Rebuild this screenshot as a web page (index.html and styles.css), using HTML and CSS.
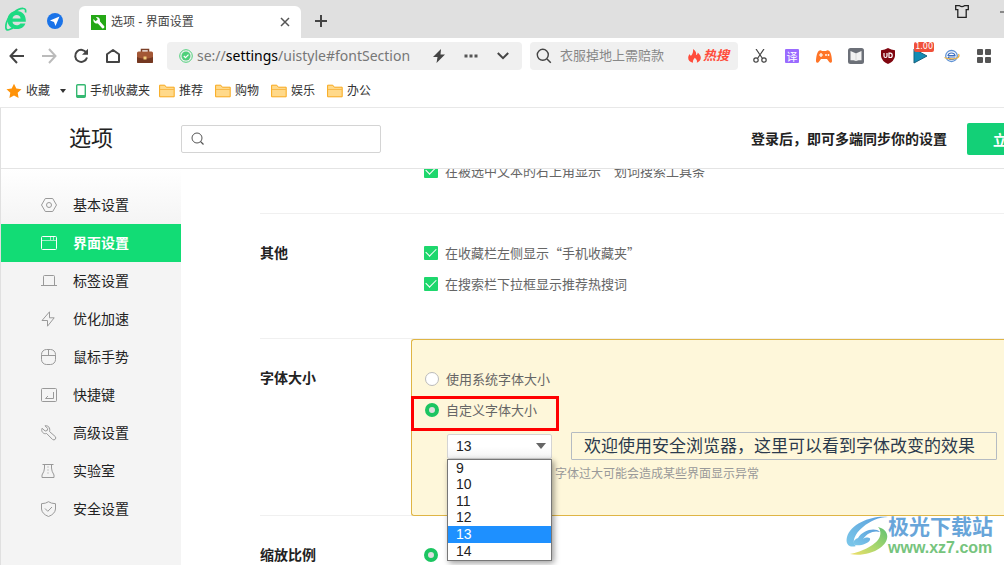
FILE: index.html
```html
<!DOCTYPE html>
<html lang="zh-CN">
<head>
<meta charset="utf-8">
<title>选项 - 界面设置</title>
<link rel="stylesheet" href="styles.css">
</head>
<body>
<div class="browser">
  <header class="tabstrip">
    <svg class="brand" width="24" height="26" viewBox="0 0 24 26"><path d="M12.500 5C7 5 3.500 9 3.500 14.300c0 5.200 3.600 8.800 9.200 8.800 4.300 0 7.400-2 8.700-5.600h-5c-.7 1.200-2 1.800-3.600 1.800-2.500 0-4.100-1.300-4.300-3.500h13.300C22.200 9.400 18.800 5 12.500 5zm-4 7.500c.4-2.200 1.900-3.500 4.200-3.500 2.200 0 3.700 1.300 3.900 3.500z" fill="#1fda83"/><path d="M21.500 6.500c.6-2.500-.2-4-2-4C14 2 5 9 2.500 16.500 1.300 20.500 1.500 24 4 24c1.500 0 3-1 5-2" fill="none" stroke="#1fda83" stroke-width="1.700"/></svg>
    <svg class="pilot" width="16" height="16" viewBox="0 0 16 16"><circle cx="8" cy="8" r="8" fill="#1a73e8"/><path d="M12.500 3.500 3 7.500l4 1.500 1.500 4z" fill="#fff"/></svg>
    <div class="tab">
      <svg width="15" height="15" viewBox="0 0 15 15"><path d="M0 0h15v15H0z" fill="#25a816"/><path d="m7.500 7 4.500 5" stroke="#fff" stroke-width="2.800" stroke-linecap="round"/><path d="M3.200 2.700 5.700 5.200M2.500 4c-.8 4 3.500 6 6 3.500C10 5 8 1.500 5 2.200l1.800 2-2.200 2z" fill="#fff"/></svg>
      <span class="tab-title">选项 - 界面设置</span>
      <button class="plain" aria-label="关闭标签"><svg width="10" height="10" viewBox="0 0 10 10"><path d="m1 1 8 8m0-8L1 9" stroke="#555" stroke-width="1.500"/></svg></button>
    </div>
    <button class="plain newtab" aria-label="新建标签"><svg width="12" height="12" viewBox="0 0 12 12"><path d="M6 0v12M0 6h12" stroke="#444" stroke-width="2"/></svg></button>
    <button class="plain skin" aria-label="皮肤"><svg width="14" height="13" viewBox="0 0 14 13"><path d="M.7.700h3.800q2.500 1.800 5 0h3.800v4h-2.100v7.600H2.800V4.700H.7z" fill="none" stroke="#222" stroke-width="1.300"/></svg></button>
    <button class="plain minimise" aria-label="最小化"><svg width="10" height="2" viewBox="0 0 10 2"><path d="M0 1h10" stroke="#333"/></svg></button>
  </header>

  <nav class="toolbar">
    <div class="tools">
      <button class="plain" aria-label="后退"><svg width="16" height="16" viewBox="0 0 16 16"><path d="M15 8H2m6-7L1.500 8 8 15" fill="none" stroke="#444" stroke-width="2"/></svg></button>
      <button class="plain" aria-label="前进"><svg width="16" height="16" viewBox="0 0 16 16"><path d="M1 8h13M8 1l6.500 7L8 15" fill="none" stroke="#bbb" stroke-width="2"/></svg></button>
      <button class="plain" aria-label="刷新"><svg width="16" height="16" viewBox="0 0 16 16"><path d="M13.500 5A6 6 0 1 0 14 9.500" fill="none" stroke="#444" stroke-width="2"/><path d="M15 .8v6H9z" fill="#444"/></svg></button>
      <button class="plain" aria-label="主页"><svg width="16" height="16" viewBox="0 0 16 16"><path d="M2 6.300 8 2l6 4.300V14H2z" fill="none" stroke="#444" stroke-width="2" stroke-linejoin="round"/></svg></button>
      <button class="plain" aria-label="工具箱"><svg width="18" height="16" viewBox="0 0 18 16"><path d="M5.500 4V1.500h7V4" fill="none" stroke="#7b3f27" stroke-width="1.500"/><rect x="1" y="3.500" width="16" height="11.500" rx="1.500" fill="#a35735"/><path d="M1 9c5 2 11 2 16 0v5q0 1-1 1H2q-1 0-1-1z" fill="#743821"/><path d="M7.500 8.500h3v3h-3z" fill="#f3ce7c"/></svg></button>
    </div>
    <div class="address">
      <svg width="14" height="14" viewBox="0 0 14 14"><circle cx="7" cy="7" r="6.300" fill="none" stroke="#4fd07b" stroke-width="1"/><circle cx="7" cy="7" r="4.500" fill="#4fd07b"/><path d="m4.800 7 1.700 1.700 3-3" fill="none" stroke="#fff" stroke-width="1.200"/></svg>
      <div class="url" role="textbox" aria-label="地址栏" contenteditable="true" spellcheck="false">se://<b>settings</b>/uistyle#fontSection</div>
      <button class="plain" aria-label="极速模式"><svg width="12" height="14" viewBox="0 0 12 14"><path d="M8 0 0 8h4.500L3.500 14 12 5.500H7.500z" fill="#444"/></svg></button>
      <button class="plain" aria-label="更多"><svg width="14" height="4" viewBox="0 0 14 4"><path d="M.5.500h3v3h-3zm5 0h3v3h-3zm5 0h3v3h-3z" fill="#555"/></svg></button>
      <button class="plain" aria-label="展开"><svg width="12" height="8" viewBox="0 0 12 8"><path d="m.8 1 5.200 5.200L11.200 1" fill="none" stroke="#444" stroke-width="2"/></svg></button>
    </div>
    <div class="search">
      <svg width="16" height="16" viewBox="0 0 16 16"><circle cx="6.800" cy="6.800" r="5.500" fill="none" stroke="#444" stroke-width="1.400"/><path d="m11 11 3.800 3.800" stroke="#444" stroke-width="1.500"/></svg>
      <input type="text" aria-label="搜索" placeholder="衣服掉地上需赔款">
      <a class="hot" href="#hot"><svg width="13" height="14" viewBox="0 0 13 14"><path d="M5 0c3 2 3.500 4 3 6 1 0 1.700-1 1.700-2.500C12 5.500 13 7.500 12.800 9c-.2 2.500-2 4-4 4.700.7-2-.3-3.500-2-5C6 10 4.500 11 5 13.700 2 13 0 11.500.200 8.500.300 7 1 6 1.700 5c.2 1 .6 1.600 1.300 1.800C4.500 5 5.500 3 5 0z" fill="#ff4c3b"/></svg>热搜</a>
    </div>
    <div class="tools">
      <button class="plain" aria-label="截图"><svg width="14" height="14" viewBox="0 0 14 14"><path d="m3 0 6.500 9.500M11 0 4.500 9.500" stroke="#444" stroke-width="1.200"/><circle cx="3" cy="11" r="2.200" fill="none" stroke="#444" stroke-width="1.200"/><circle cx="11" cy="11" r="2.200" fill="none" stroke="#444" stroke-width="1.200"/></svg></button>
      <button class="plain" aria-label="翻译"><span class="translate">译</span></button>
      <button class="plain" aria-label="游戏"><svg width="16" height="13" viewBox="0 0 16 13"><path d="M3.500.500Q5 0 6 1h4q1-1 2.500-.5C15 1 16 8 16 11c0 2-2 2.500-3 .8L11 9H5l-2 2.800C2 13.500 0 13 0 11 0 8 1 1 3.500.500z" fill="#ff7427"/><path d="M5 3v4M3 5h4" stroke="#fff" stroke-width="1.200"/><circle cx="10" cy="5" r=".9" fill="#fff"/><circle cx="12.500" cy="5" r=".9" fill="#fff"/></svg></button>
      <button class="plain" aria-label="阅读"><svg width="16" height="16" viewBox="0 0 16 16"><rect width="16" height="16" rx="2.500" fill="#6c7078"/><path d="M2.500 3 6 4.500 8 5.500l2-1L13.500 3v9.300H10.500L8 13l-2.500-.7h-3z" fill="#f2f2f2"/><path d="M8 5.500V13" stroke="#d8d8d8"/></svg></button>
      <button class="plain" aria-label="广告拦截"><svg width="16" height="16" viewBox="0 0 16 16"><path d="M8 0q3 2 7 2.200V8q-.5 5-7 8-6.500-3-7-8V2.200Q5 2 8 0z" fill="#800610"/><path d="M4 5v3q0 1.500 1.500 1.500T7 8V5m2 .200h1.300q1.900 0 1.900 2.200T10.300 9.500H9z" fill="none" stroke="#fff" stroke-width="1.200"/></svg></button>
      <button class="plain flag" aria-label="视频倍速"><svg width="15" height="16" viewBox="0 0 15 16"><path d="M1 1v14l13-7z" fill="#128cb4" stroke="#17617d"/></svg><span class="badge">1.00</span></button>
      <button class="plain" aria-label="浏览器医生"><svg width="16" height="14" viewBox="0 0 16 14"><ellipse cx="7.500" cy="7" rx="5.800" ry="5.500" fill="#fff" stroke="#5f92d4" stroke-width="1.300"/><path d="M4 6.500q.5-2.500 3.500-2.500t3.500 2.500zm0 1.500h7.500M4 8q.8 2.500 3.500 2.500T11 9.500" fill="none" stroke="#3e6fc0" stroke-width="1.200"/><path d="M.5 8.500c3 1.500 9 2 12.500.5 2-.8 2.500-2.500 1.500-4" fill="none" stroke="#efb33e" stroke-width="1.300"/></svg></button>
      <button class="plain" aria-label="扩展"><svg width="14" height="14" viewBox="0 0 14 14"><path d="M1 0h4q1 0 1 1v4q0 1-1 1H1Q0 6 0 5V1q0-1 1-1zm8 0h4q1 0 1 1v4q0 1-1 1H9Q8 6 8 5V1q0-1 1-1zM1 8h4q1 0 1 1v4q0 1-1 1H1q-1 0-1-1V9q0-1 1-1zm8 0h4q1 0 1 1v4q0 1-1 1H9q-1 0-1-1V9q0-1 1-1z" fill="#555"/></svg></button>
    </div>
  </nav>

  <nav class="bookmarks">
    <a href="#fav"><svg width="16" height="16" viewBox="0 0 16 16"><path d="m8 .8 2.300 4.700 5.200.7-3.800 3.600.9 5.200L8 12.500 3.400 15l.9-5.200L.5 6.200l5.200-.7z" fill="#ff9309"/></svg>收藏</a>
    <button class="plain caret" aria-label="展开收藏"><svg width="6" height="4" viewBox="0 0 6 4"><path d="M0 0h6L3 4z" fill="#333"/></svg></button>
    <a href="#phone"><svg width="10" height="14" viewBox="0 0 10 14"><rect x=".7" y=".7" width="8.600" height="12.600" rx="1" fill="#fff" stroke="#35b871" stroke-width="1.400"/><path d="M1 11h8v2H1z" fill="#35b871"/></svg>手机收藏夹</a>
    <a href="#1"><svg class="folder" viewBox="0 0 16 14"><path d="M.6 12.800V1.200h5.200l1.500 2h7.900v9.600z" fill="#ffd98a" stroke="#f8a91c"/><path d="M1 5.500h14" stroke="#f8b94a"/></svg>推荐</a>
    <a href="#2"><svg class="folder" viewBox="0 0 16 14"><path d="M.6 12.800V1.200h5.200l1.500 2h7.900v9.600z" fill="#ffd98a" stroke="#f8a91c"/><path d="M1 5.500h14" stroke="#f8b94a"/></svg>购物</a>
    <a href="#3"><svg class="folder" viewBox="0 0 16 14"><path d="M.6 12.800V1.200h5.200l1.500 2h7.900v9.600z" fill="#ffd98a" stroke="#f8a91c"/><path d="M1 5.500h14" stroke="#f8b94a"/></svg>娱乐</a>
    <a href="#4"><svg class="folder" viewBox="0 0 16 14"><path d="M.6 12.800V1.200h5.200l1.500 2h7.900v9.600z" fill="#ffd98a" stroke="#f8a91c"/><path d="M1 5.500h14" stroke="#f8b94a"/></svg>办公</a>
  </nav>

  <div class="page">
    <header class="page-header">
      <h1>选项</h1>
      <div class="filter">
        <svg width="14" height="14" viewBox="0 0 14 14"><circle cx="6" cy="6" r="5" fill="none" stroke="#555"/><path d="m9.500 9.500 3 3" stroke="#555" stroke-width="1.200"/></svg>
        <input type="text" aria-label="搜索选项">
      </div>
      <p class="sync">登录后，即可多端同步你的设置</p>
      <button class="login">立</button>
    </header>

    <div class="columns">
      <nav class="sidebar">
        <a href="#base"><svg viewBox="0 0 16 16"><path d="M4.300 1.500h7.400L15.500 8l-3.800 6.500H4.300L.5 8z"/><circle cx="8" cy="8" r="2.500"/></svg>基本设置</a>
        <a href="#ui" class="active" aria-current="page"><svg viewBox="0 0 16 16"><rect x=".5" y="1.500" width="15" height="13" rx="1"/><path d="M.5 5.500h15M9.500 2v3m3-3v3" opacity=".6"/></svg>界面设置</a>
        <a href="#tabs"><svg viewBox="0 0 16 16"><path d="M2.500 12.500V3.500q0-1 1-1h9q1 0 1 1v9M0 12.500h16"/></svg>标签设置</a>
        <a href="#speed"><svg viewBox="0 0 16 16"><path d="M8.500.800v6h4.700L6.500 15.200V9.500H1z"/></svg>优化加速</a>
        <a href="#mouse"><svg viewBox="0 0 16 16"><rect x=".5" y=".5" width="14" height="15" rx="5"/><path d="M.5 6.500h14m-7-6v6"/></svg>鼠标手势</a>
        <a href="#keys"><svg viewBox="0 0 16 16"><rect x=".5" y="1.500" width="15" height="13" rx="1"/><path d="M12.500 5v6.500h-8L7 9"/></svg>快捷键</a>
        <a href="#advanced"><svg viewBox="0 0 16 16"><path d="m4 .8 2.700 2.700-.5 2-2 .5L1 3.300c-1.200 3 1.300 6.200 4.600 5.200l6 6q1.500 1 2.600-.2t.2-2.600L8.500 6.500C9.500 3 7.500.300 4 .800z"/></svg>高级设置</a>
        <a href="#lab"><svg viewBox="0 0 16 16"><path d="M1.500 1.500h11M3.500 1.500v3.500q0 3-2.500 7v2.500h12V12q-2.500-4-2.500-7V1.500"/><path d="M7 3.500v8" stroke-dasharray="1 2"/></svg>实验室</a>
        <a href="#safe"><svg viewBox="0 0 16 16"><path d="M7.500.700Q10 2.500 14.500 2.700V8q-.5 5-7 7.500-6.500-2.500-7-7.500V2.700Q5 2.500 7.500.700zM4 7.500l2.800 2.800L11 6"/></svg>安全设置</a>
      </nav>

      <main class="settings">
        <section class="group scrolled">
          <div class="field"><label><input type="checkbox" checked>在被选中文本的右上角显示“划词搜索工具条”</label></div>
        </section>
        <section class="group other">
          <h2>其他</h2>
          <div class="field">
            <label><input type="checkbox" checked>在收藏栏左侧显示“手机收藏夹”</label>
            <label><input type="checkbox" checked>在搜索栏下拉框显示推荐热搜词</label>
          </div>
        </section>
        <section class="group">
          <h2>字体大小</h2>
          <div class="field panel">
            <label><input type="radio" name="font">使用系统字体大小</label>
            <label><input type="radio" name="font" checked>自定义字体大小</label>
            <span class="marker"></span>
            <div class="font-row">
              <div class="dropdown">
                <select aria-label="字体大小"><option>9</option><option>10</option><option>11</option><option>12</option><option selected>13</option><option>14</option></select>
                <svg class="arrow" width="10" height="6" viewBox="0 0 10 6"><path d="M0 0h10L5 6z" fill="#666"/></svg>
                <ul class="menu" role="listbox" aria-label="字号列表">
                  <li role="option">9</li><li role="option">10</li><li role="option">11</li><li role="option">12</li><li role="option" class="chosen" aria-selected="true">13</li><li role="option">14</li>
                </ul>
              </div>
              <div class="preview">欢迎使用安全浏览器，这里可以看到字体改变的效果</div>
            </div>
            <p class="hint">字体过大可能会造成某些界面显示异常</p>
          </div>
        </section>
        <section class="group">
          <h2>缩放比例</h2>
          <div class="field"><label><input type="radio" name="zoom" aria-label="缩放比例" checked></label></div>
        </section>
      </main>
    </div>
  </div>

  <div class="watermark">
    <svg width="42" height="40" viewBox="0 0 42 40">
      <defs>
        <linearGradient id="sky" x1="0" y1="1" x2="1" y2="0"><stop offset="0" stop-color="#7cc8ea"/><stop offset="1" stop-color="#5a9edb"/></linearGradient>
        <linearGradient id="leaf" x1="0" y1="1" x2="1" y2="0"><stop offset="0" stop-color="#f1df69"/><stop offset=".5" stop-color="#a6d66d"/><stop offset="1" stop-color="#5fc074"/></linearGradient>
      </defs>
      <path d="M42 1C27-1 5 7 1 21c-2 8 3 11 9 9C5 27 9 17 17 11c7-6 16-10 25-10z" fill="url(#sky)"/>
      <path d="M12 22c5-8 17-11 22-6-6-2-13 1-17 7 3-2 8-2 7 1-2 4-10 6-15 5-3-1-2-5 3-7z" fill="url(#sky)"/>
      <path d="M32 11c12 3 12 14 2 21C26 38 13 40 4 38c12-2 28-10 30-18 1-4 0-7-2-9z" fill="url(#leaf)"/>
    </svg>
    <div><strong>极光下载站</strong><span>www.xz7.com</span></div>
  </div>
</div>
</body>
</html>
```
FILE: styles.css
```css
* { box-sizing: border-box; }

body {
  margin: 0;
  overflow: hidden;
  background: #fff;
  color: #222;
  font: 12px/18px "Liberation Sans", "Noto Sans CJK SC", sans-serif;
}

h1, h2, p, ul { margin: 0; padding: 0; }
a { color: inherit; text-decoration: none; }
svg { flex: none; display: block; }

.plain {
  display: flex;
  align-items: center;
  justify-content: center;
  padding: 0;
  border: 0;
  background: none;
}

.browser {
  position: relative;
  display: flex;
  flex-direction: column;
  height: 100vh;
  overflow: hidden;
}

/* Tab strip */
.tabstrip {
  display: flex;
  align-items: flex-end;
  height: 38px;
  padding-left: 4px;
  background: #e0e0e0;
}
.brand { margin-bottom: 6px; }
.pilot { margin: 0 16px 9px 19px; }
.tab {
  display: flex;
  align-items: center;
  gap: 5px;
  width: 222px;
  height: 32px;
  padding: 0 11px 0 12px;
  border-radius: 6px 6px 0 0;
  background: #fff;
}
.tab-title { flex: 1; color: #444; }
.newtab { width: 40px; height: 34px; }
.skin { margin: 0 31px 20px auto; }
.minimise { width: 4px; height: 2px; margin-bottom: 25px; overflow: hidden; }

/* Toolbar */
.toolbar {
  display: flex;
  align-items: center;
  height: 36px;
  padding: 0 4px 0 1px;
}
.tools { display: flex; }
.tools .plain { width: 32px; height: 32px; }
.address, .search {
  display: flex;
  align-items: center;
  height: 28px;
  border-radius: 4px;
  background: #f0f0f0;
}
.address { flex: 1; min-width: 0; margin: 0 8px 0 6px; padding: 0 3px 0 12px; }
.address .plain { width: 32px; height: 28px; }
.url {
  flex: 1;
  min-width: 0;
  padding-left: 4px;
  color: #777;
  font: 14px/20px "Noto Sans", sans-serif;
  white-space: nowrap;
}
.url b { color: #000; font-weight: 400; }
.search { width: 208px; margin-right: 6px; padding: 0 9px 0 6px; gap: 8px; }
.search input {
  flex: 1;
  min-width: 0;
  padding: 0;
  border: 0;
  background: none;
  font: 13px/20px "Liberation Sans", "Noto Sans CJK SC", sans-serif;
}
.search input::placeholder { color: #888; opacity: 1; }
.hot {
  display: flex;
  align-items: center;
  gap: 2px;
  color: #ff4c3b;
  font-size: 13px;
  font-weight: 700;
  font-style: italic;
}
.translate {
  width: 14px;
  height: 14px;
  border-radius: 1px;
  background: #9a6bff;
  color: #fff;
  font: 11px/14px "Noto Sans CJK SC", sans-serif;
}
.flag { position: relative; }
.badge {
  position: absolute;
  top: 2px;
  right: 2px;
  padding: 0 1px;
  border-radius: 2px;
  background: #f0503a;
  color: #fff;
  font: 8px/10px "DejaVu Sans", sans-serif;
}

/* Bookmarks bar */
.bookmarks {
  display: flex;
  align-items: center;
  gap: 9px;
  height: 34px;
  padding-left: 6px;
  border-bottom: 1px solid #e8e8e8;
  color: #333;
}
.bookmarks a { display: flex; align-items: center; gap: 4px; }
.folder { width: 16px; height: 14px; }
.caret { width: 8px; height: 18px; }
.bookmarks a + a { margin-right: 3px; }
.bookmarks .caret + a { margin-right: 0; }

/* Settings page */
.page {
  display: flex;
  flex: 1;
  flex-direction: column;
  min-height: 0;
  border-left: 1px solid #e0e0e0;
}
.page-header {
  display: flex;
  flex: none;
  align-items: center;
  height: 61px;
  padding: 1px 0 0 68px;
  border-bottom: 1px solid #e4e4e4;
}
h1 { width: 112px; font-size: 22px; font-weight: 400; line-height: 32px; }
.filter {
  display: flex;
  align-items: center;
  width: 200px;
  height: 28px;
  padding: 0 9px;
  border: 1px solid #d4d4d4;
  border-radius: 2px;
}
.filter input { flex: 1; min-width: 0; padding: 0 6px; border: 0; background: none; }
.sync { margin-left: auto; font-size: 14px; font-weight: 700; line-height: 20px; }
.login {
  flex: none;
  height: 32px;
  margin: 0 -29px 0 20px;
  padding: 0 26px;
  border: 0;
  border-radius: 2px;
  background: #13d077;
  color: #fff;
  font: 700 14px/20px "Noto Sans CJK SC", sans-serif;
}
.columns { display: flex; flex: 1; min-height: 0; overflow: hidden; }
.sidebar {
  flex: none;
  width: 180px;
  padding-top: 17px;
  background: linear-gradient(#fff, #f4f4f4 56px);
}
.sidebar a {
  display: flex;
  align-items: center;
  gap: 16px;
  height: 38px;
  padding-left: 40px;
  font-size: 14px;
}
.sidebar svg { width: 16px; height: 16px; fill: none; stroke: #999; }
.sidebar .active { background: #12dc75; color: #fff; font-weight: 700; }
.sidebar .active svg { stroke: #fff; }

.settings { flex: 1; min-width: 0; padding-left: 79px; }
.group { display: flex; padding-top: 24px; border-top: 1px solid #f0f0f0; }
.group h2 { flex: none; width: 151px; font-size: 14px; line-height: 31px; }
.group.scrolled { margin-top: -13px; padding: 0 0 27px 151px; border: 0; }
.group.other { padding-bottom: 39px; }
.field { flex: 1; min-width: 0; margin-top: -1px; padding-left: 13px; }
.field label {
  display: flex;
  align-items: center;
  gap: 7px;
  height: 31px;
  color: #666;
  font: 13px/20px "Noto Sans CJK SC", sans-serif;
  white-space: nowrap;
}
.field input {
  appearance: none;
  flex: none;
  width: 14px;
  height: 14px;
  margin: 0;
  border: 1px solid #bbb;
  border-radius: 7px;
  background: #fff;
}
.field input[type="radio"]:checked { border: 4px solid #1cc561; background: #ddd; }
.field input[type="checkbox"] {
  display: grid;
  place-items: center;
  border: 0;
  border-radius: 1px;
  background: #1ed76d;
}
.field input[type="checkbox"]::before {
  width: 9px;
  height: 5px;
  margin-bottom: 3px;
  border: solid #fff;
  border-width: 0 0 1px 1px;
  content: "";
  transform: rotate(-45deg);
}

.panel {
  position: relative;
  margin: -24px 0 -1px;
  padding-top: 23px;
  padding-bottom: 32px;
  border: 1px solid #dfb545;
  border-right: 0;
  border-radius: 3px 0 0 3px;
  background: #fef7da;
}
.marker {
  position: absolute;
  top: 56px;
  left: -1px;
  width: 148px;
  height: 35px;
  border: 3px solid #f00;
}
.font-row { display: flex; align-items: center; margin: 7px 7px 0 22px; }
.dropdown { position: relative; width: 105px; height: 25px; margin-right: 19px; }
.dropdown select {
  appearance: none;
  width: 100%;
  height: 100%;
  padding: 0 8px;
  border: 1px solid #d4d4d4;
  border-radius: 2px;
  background: linear-gradient(#fff 50%, #f4f4f4);
  color: #222;
  font: 14px/20px "Liberation Sans", sans-serif;
}
.arrow { position: absolute; top: 9px; right: 6px; }
.menu {
  position: absolute;
  z-index: 2;
  top: 100%;
  left: 0;
  display: grid;
  grid-template-rows: repeat(6, 1fr);
  width: 100%;
  height: 102px;
  border: 1px solid #777;
  background: #fff;
  box-shadow: 2px 2px 6px #0006;
  color: #222;
  font: 14px/16px "Liberation Sans", sans-serif;
  list-style: none;
}
.menu li { padding-left: 8px; }
.menu .chosen { background: #1e90ff; color: #fff; }
.preview {
  flex: 1;
  min-width: 0;
  height: 28px;
  padding-left: 12px;
  border: 1px solid #b5bbc2;
  border-radius: 1px;
  color: #2b3a4d;
  font-size: 17px;
  line-height: 28px;
  white-space: nowrap;
}
.hint { margin: 5px 0 0 130px; color: #999; }

.watermark {
  position: absolute;
  right: 11px;
  bottom: 8px;
  display: flex;
  align-items: center;
}
.watermark strong {
  display: block;
  color: #68a5d9;
  font-size: 21px;
  line-height: 24px;
}
.watermark span {
  display: block;
  color: #76c47d;
  font-size: 16px;
  font-weight: 700;
  line-height: 18px;
}
```
